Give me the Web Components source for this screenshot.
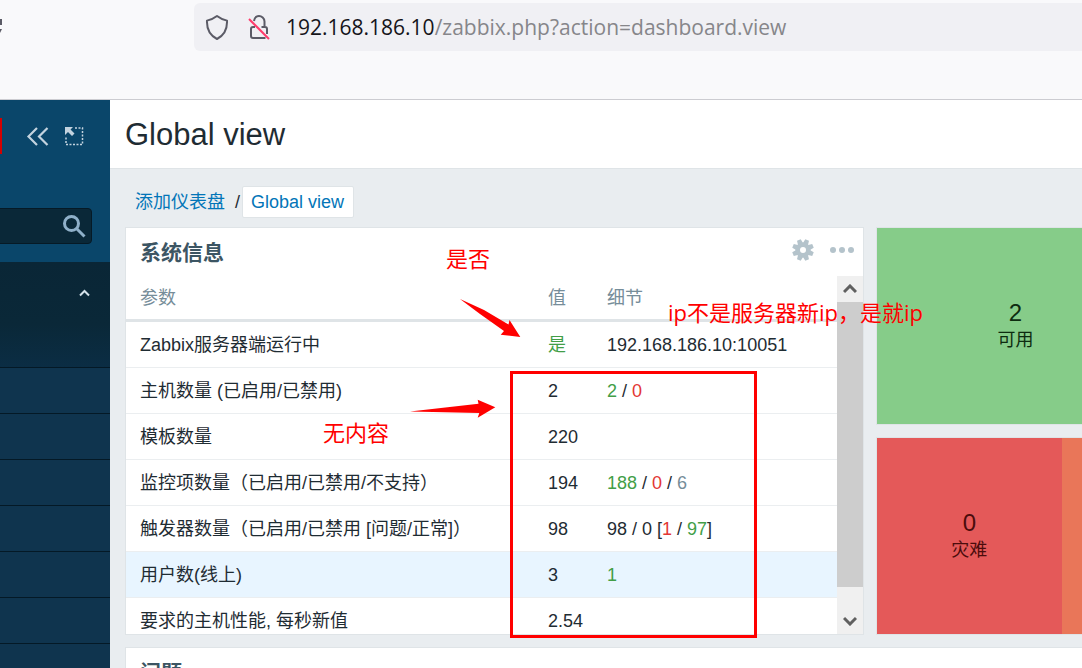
<!DOCTYPE html>
<html lang="zh-CN">
<head>
<meta charset="utf-8">
<title>Global view</title>
<style>
html,body{margin:0;height:100%}
body{overflow:hidden;font:18px/24px "Liberation Sans","Noto Sans CJK SC",sans-serif;color:#1f2c33}
</style>
</head>
<body>
<app-window>
  <browser-bar slot="bar"></browser-bar>
  <side-nav slot="nav"></side-nav>
  <dash-board slot="main"></dash-board>
  <annotation-layer slot="notes"></annotation-layer>
</app-window>
<script>
const define = (name, html) => customElements.define(name, class extends HTMLElement {
  constructor() {
    super();
    this.attachShadow({ mode: 'open' }).innerHTML = html;
  }
});

define('app-window', `
<style>
:host{display:flex;flex-direction:column;position:relative;height:100vh;overflow:hidden}
.body{display:flex;flex:1;min-height:0}
::slotted([slot=main]){flex:1;min-width:0}
</style>
<slot name="bar"></slot>
<div class="body"><slot name="nav"></slot><slot name="main"></slot></div>
<slot name="notes"></slot>`);

define('browser-bar', `
<style>
:host{display:block;height:96px;padding-top:3px;background:#f9f9fb;border-bottom:1px solid #ccccd1;overflow:hidden}
.row{display:flex;align-items:center}
.reload{width:194px;flex:none;height:24px}
.field{flex:1;display:flex;align-items:center;height:48px;padding-left:11px;border-radius:6px 0 0 6px;background:#f0f0f4;font:21px/30px "Open Sans","Noto Sans",sans-serif;color:#86868a}
.field svg{flex:none}
.lock{margin:0 14px 0 17px}
b{font-weight:400;color:#15141a}
p{margin:0;white-space:nowrap}
</style>
<div class="row">
  <svg class="reload" viewBox="0 0 194 24" fill="#5b5b66"><path d="M0 4h2v6H0zM0 14h2l-2 4z"/></svg>
  <div class="field">
    <svg width="24" height="26" viewBox="0 0 24 26" fill="none" stroke="#5b5b66" stroke-width="2" stroke-linejoin="round"><path d="M12 2c3 2.400 6 3.600 10 4.600.4 8.400-2.500 14.400-10 18.400C4.500 21 1.600 15 2 6.600 6 5.600 9 4.400 12 2z"/></svg>
    <svg class="lock" width="26" height="26" viewBox="0 0 26 26" fill="none" stroke="#5b5b66" stroke-width="2"><path d="M8 7c.5-3 2.500-5 5-5s5.500 2 5.500 5.500V13M15.500 13H19q2 0 2 2v5M9 13H7q-2 0-2 2v7q0 2 2 2h12.500"/><path stroke="#ff3b6b" d="M3 5l20 20"/></svg>
    <p><b>192.168.186.10</b>/zabbix.php?action=dashboard.view</p>
  </div>
</div>`);

define('side-nav', `
<style>
:host{display:flex;flex-direction:column;flex:none;width:110px;overflow:hidden;background:#0a466a}
.top{display:flex;align-items:center;flex:none;height:36px;padding-top:18px;margin-bottom:54px}
.logo{width:2px;height:36px;background:#d40000;margin-right:24px}
button{border:0;padding:0;background:none;display:flex}
.top button{margin-right:15px}
.search{display:flex;align-items:center;flex:none;box-sizing:border-box;height:36px;margin:0 18px 18px -8px;border:1px solid #061a26;border-radius:4px;background:#0a2838}
input{flex:1;min-width:0;border:0;background:none;outline:0;color:#fff;font:inherit}
.search button{margin-right:5px}
.section{display:flex;justify-content:flex-end;align-items:center;width:100%;height:62px;flex:none;padding-right:20px;background:linear-gradient(#0a2636,#0a2838)}
nav{display:flex;flex-direction:column}
a{box-sizing:border-box;height:46px;flex:none;background:#0f344e;border-bottom:1px solid #041926}
a:first-of-type{height:44px;background:linear-gradient(#0a2838,#0b2d44)}
</style>
<div class="top"><span class="logo"></span>
  <button aria-label="收起"><svg width="23" height="20" viewBox="0 0 23 20" fill="none" stroke="#c3d3df" stroke-width="2.200"><path d="M11 2l-8.500 8.500L11 19M21.500 2L13 10.500l8.500 8.500"/></svg></button>
  <button aria-label="隐藏"><svg width="20" height="20" viewBox="0 0 20 20"><path d="M11 2h7.500v16.500H2V11" fill="none" stroke="#c3d3df" stroke-width="1.500" stroke-dasharray="2 1.500"/><path d="M1 1h8L6.500 3.500l4 4-2.500 2.500-4-4L1 9z" fill="#c3d3df"/></svg></button>
</div>
<div class="search"><input aria-label="搜索"><button aria-label="搜索"><svg width="24" height="24" viewBox="0 0 24 24" fill="none" stroke="#8fb0c9" stroke-width="3"><circle cx="9.500" cy="9.500" r="7"/><path d="M14.500 14.500l8 8"/></svg></button></div>
<button class="section" aria-label="监测"><svg width="11" height="8" viewBox="0 0 11 8" fill="none" stroke="#d3e0e8" stroke-width="2"><path d="M1 6.500l4.500-4.500L10 6.500"/></svg></button>
<nav>${'<a href="#"></a>'.repeat(8)}</nav>`);

define('dash-board', `
<style>
:host{display:block;background:#e9edf0;overflow:hidden}
header{height:68px;padding-left:15px;background:#fff;border-bottom:1px solid #dfe4e7}
h1{margin:0;font:31px/70px "Liberation Sans",sans-serif}
.crumbs{display:flex;align-items:center;height:34px;padding:16px 0 8px 25px}
a{color:#0275b8;text-decoration:none}
.crumbs i{font-style:normal;margin:0 2px 0 10px}
.here{box-sizing:border-box;height:32px;padding:0 9px 0 8px;border:1px solid #dfe4e7;border-radius:2px;background:#fff;line-height:30px}
.grid{display:grid;grid-template-columns:minmax(0,739fr) minmax(0,279fr);grid-auto-rows:198px;gap:12px;margin:0 -73px 0 15px}
sys-panel{grid-row:span 2}
.problems{grid-column:span 2}
.sev{display:flex}
.sev :first-child{flex:2}
.sev :last-child{flex:1}
.tile{border:1px solid #dfe4e7;box-sizing:border-box}
</style>
<header><h1>Global view</h1></header>
<div class="crumbs"><a href="#">添加仪表盘</a><i>/</i><a class="here" href="#">Global view</a></div>
<div class="grid">
  <sys-panel></sys-panel>
  <status-tile class="tile" style="--bg:#86cc89;--ink:#0d2b10"><span slot="n">2</span>可用</status-tile>
  <div class="tile sev">
    <status-tile style="--bg:#e45959;--ink:#4b0c0c"><span slot="n">0</span>灾难</status-tile>
    <status-tile style="--bg:#e97659;--ink:#52190b"></status-tile>
  </div>
  <panel-box class="problems"><span slot="title">问题</span></panel-box>
</div>`);

define('status-tile', `
<style>
:host{display:flex;flex-direction:column;align-items:center;justify-content:center;background:var(--bg);color:var(--ink);line-height:28px}
.n{font-size:24px;line-height:26px;padding-top:2px}
</style>
<span class="n"><slot name="n"></slot></span><span><slot></slot></span>`);

define('panel-box', `
<style>
:host{display:flex;flex-direction:column;box-sizing:border-box;background:#fff;border:1px solid #dfe4e7;overflow:hidden}
.head{display:flex;align-items:center;justify-content:space-between;height:48px;flex:none;padding:0 8px 0 14px}
h2{margin:0;font-size:21px;line-height:48px;padding-top:2px;font-weight:700;color:#3c5563}
</style>
<div class="head"><h2><slot name="title"></slot></h2><slot name="tools"></slot></div><slot></slot>`);

const rows = [
  ['Zabbix服务器端运行中', '<span class="g">是</span>', '192.168.186.10:10051'],
  ['主机数量 (已启用/已禁用)', '2', '<span class="g">2</span> / <span class="r">0</span>'],
  ['模板数量', '220', ''],
  ['监控项数量（已启用/已禁用/不支持）', '194', '<span class="g">188</span> / <span class="r">0</span> / <span class="m">6</span>'],
  ['触发器数量（已启用/已禁用 [问题/正常]）', '98', '98 / 0 [<span class="r">1</span> / <span class="g">97</span>]'],
  ['用户数(线上)', '3', '<span class="g">1</span>'],
  ['要求的主机性能, 每秒新值', '2.54', '']
];

define('sys-panel', `
<style>
:host{display:flex;min-height:0}
panel-box{flex:1;min-width:0}
.tools{display:flex;align-items:center;gap:15px;padding-bottom:4px}
button{border:0;padding:0;background:none;display:flex}
.scroll{display:flex;flex:1;min-height:0}
.view{flex:1;overflow:hidden}
table{width:100%;table-layout:fixed;border-collapse:separate;border-spacing:0}
th,td{box-sizing:border-box;height:46px;padding:0;text-align:left;font-weight:400;white-space:nowrap;border-bottom:1px solid #ebeef0}
th{color:#768d99;border-bottom:3px solid #dfe4e7}
th:nth-child(1){width:422px}
th:nth-child(2){width:59px}
th:first-child,td:first-child{padding-left:14px}
tbody tr:nth-child(6){background:#e8f5ff}
.g{color:#429e47}.r{color:#e33734}.m{color:#768d99}
.bar{display:flex;flex-direction:column;width:26px;background:#f0f0f0}
.bar button{height:26px;align-items:center;justify-content:center}
.thumb{flex:285;background:#cdcdcd}
.rest{flex:21}
</style>
<panel-box>
  <span slot="title">系统信息</span>
  <div class="tools" slot="tools">
    <button aria-label="编辑"><svg width="22" height="22" viewBox="-11 -11 22 22" fill="#b4c3cb"><g transform="rotate(22.500)"><path d="M-2-10.800h4l.8 5h-5.600zM-2 10.800h4l.8-5h-5.600z"/><path transform="rotate(45)" d="M-2-10.800h4l.8 5h-5.600zM-2 10.800h4l.8-5h-5.600z"/><path transform="rotate(90)" d="M-2-10.800h4l.8 5h-5.600zM-2 10.800h4l.8-5h-5.600z"/><path transform="rotate(135)" d="M-2-10.800h4l.8 5h-5.600zM-2 10.800h4l.8-5h-5.600z"/></g><circle r="5.300" fill="none" stroke="#b4c3cb" stroke-width="4.600"/></svg></button>
    <button aria-label="更多"><svg width="26" height="8" viewBox="0 0 26 8" fill="#b4c3cb"><circle cx="4" cy="4" r="3"/><circle cx="13" cy="4" r="3"/><circle cx="22" cy="4" r="3"/></svg></button>
  </div>
  <div class="scroll">
    <div class="view"><table>
      <thead><tr><th>参数</th><th>值</th><th>细节</th></tr></thead>
      <tbody>${rows.map(r => `<tr>${r.map(c => `<td>${c}</td>`).join('')}</tr>`).join('')}</tbody>
    </table></div>
    <div class="bar">
      <button aria-label="向上"><svg width="14" height="10" viewBox="0 0 14 10"><path d="M1 8l6-6 6 6" fill="none" stroke="#606060" stroke-width="3"/></svg></button>
      <div class="thumb"></div><div class="rest"></div>
      <button aria-label="向下"><svg width="14" height="10" viewBox="0 0 14 10"><path d="M1 2l6 6 6-6" fill="none" stroke="#606060" stroke-width="3"/></svg></button>
    </div>
  </div>
</panel-box>`);

define('annotation-layer', `
<style>
:host{position:absolute;inset:0;pointer-events:none;color:#f00;font:22px/30px "Open Sans","Noto Sans CJK SC",sans-serif}
span,svg,div{position:absolute;white-space:nowrap}
.yes{left:446px;top:243px}
.ip{left:668px;top:297px}
.none{left:323px;top:417px}
.frame{left:510px;top:371px;width:241px;height:261px;border:3px solid #f00}
.a{left:460px;top:299px}
.b{left:410px;top:399px}
</style>
<span class="yes">是否</span><span class="ip">ip不是服务器新ip，是就ip</span><span class="none">无内容</span>
<div class="frame"></div>
<svg class="a" width="61" height="39" fill="#f00"><path d="M0 0L24 11 48.500 25.500 49.500 21 60.300 38 40.700 35.700 44 32 20 15z"/></svg>
<svg class="b" width="86" height="20" fill="#f00"><path d="M0 12.500L68.500 4.700 67.700.7 85.300 8.300 67.700 18.700 69.300 14z"/></svg>`);
</script>
</body>
</html>
